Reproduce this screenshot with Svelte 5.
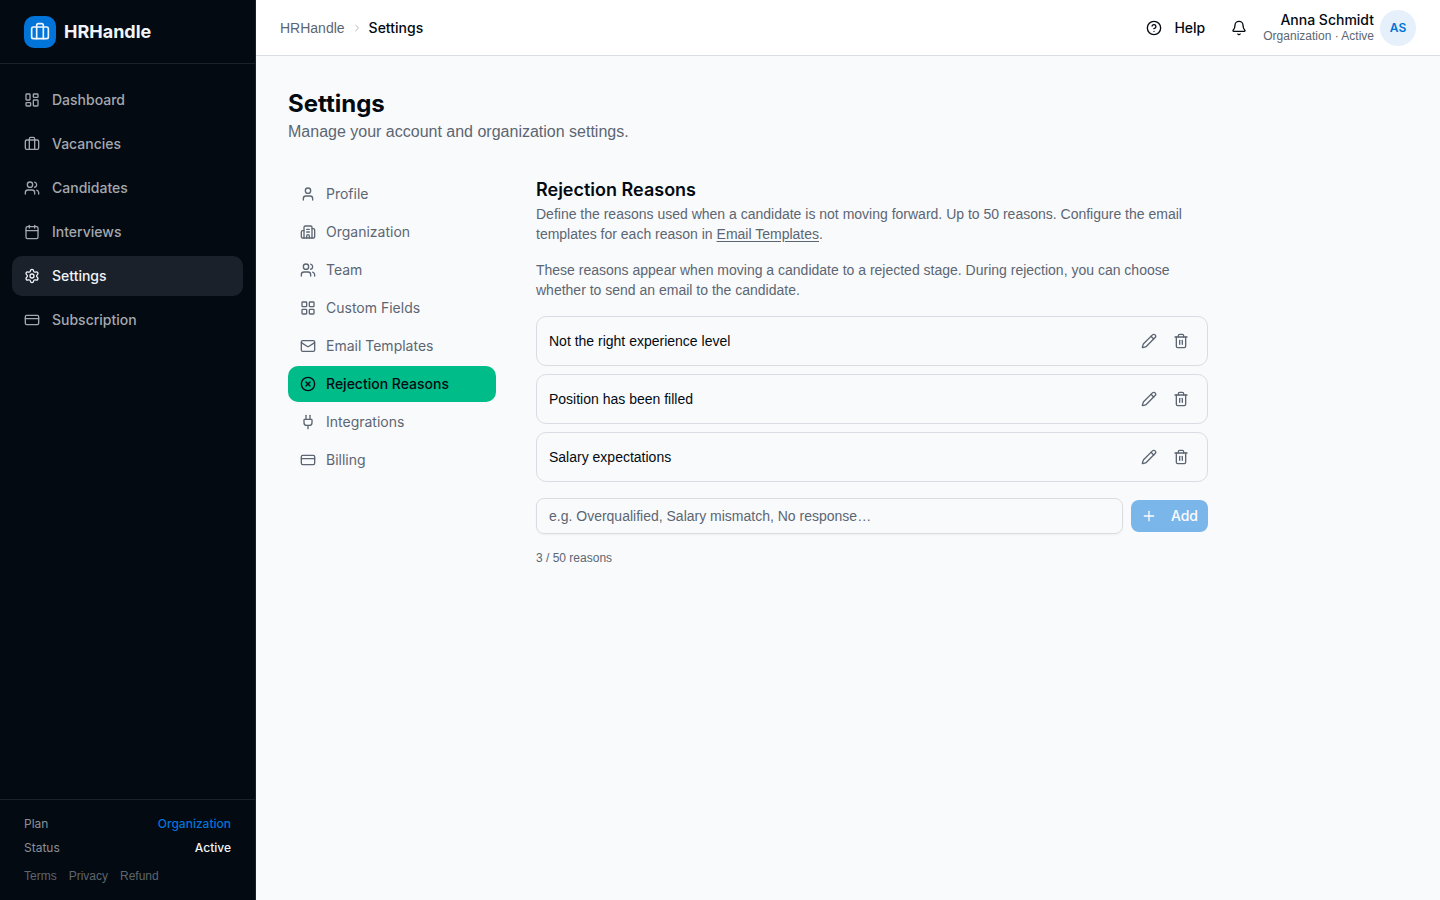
<script lang="ts">
  type Item = { label: string; icon: string; active?: boolean };

  const icons: Record<string, string[]> = {
    dashboard: [
      "M4 3h4a1 1 0 0 1 1 1v7a1 1 0 0 1-1 1H4a1 1 0 0 1-1-1V4a1 1 0 0 1 1-1z",
      "M15 3h5a1 1 0 0 1 1 1v3a1 1 0 0 1-1 1h-5a1 1 0 0 1-1-1V4a1 1 0 0 1 1-1z",
      "M15 12h5a1 1 0 0 1 1 1v7a1 1 0 0 1-1 1h-5a1 1 0 0 1-1-1v-7a1 1 0 0 1 1-1z",
      "M4 16h5a1 1 0 0 1 1 1v3a1 1 0 0 1-1 1H4a1 1 0 0 1-1-1v-3a1 1 0 0 1 1-1z",
    ],
    briefcase: [
      "M16 20V4a2 2 0 0 0-2-2h-4a2 2 0 0 0-2 2v16",
      "M4 6h16a2 2 0 0 1 2 2v10a2 2 0 0 1-2 2H4a2 2 0 0 1-2-2V8a2 2 0 0 1 2-2z",
    ],
    users: [
      "M16 21v-2a4 4 0 0 0-4-4H6a4 4 0 0 0-4 4v2",
      "M16 3.128a4 4 0 0 1 0 7.744",
      "M22 21v-2a4 4 0 0 0-3-3.87",
      "M5 7a4 4 0 1 0 8 0a4 4 0 1 0-8 0",
    ],
    calendar: [
      "M8 2v4",
      "M16 2v4",
      "M5 4h14a2 2 0 0 1 2 2v14a2 2 0 0 1-2 2H5a2 2 0 0 1-2-2V6a2 2 0 0 1 2-2z",
      "M3 10h18",
    ],
    settings: [
      "M9.671 4.136a2.34 2.34 0 0 1 4.659 0 2.34 2.34 0 0 0 3.319 1.915 2.34 2.34 0 0 1 2.33 4.033 2.34 2.34 0 0 0 0 3.831 2.34 2.34 0 0 1-2.33 4.033 2.34 2.34 0 0 0-3.319 1.915 2.34 2.34 0 0 1-4.659 0 2.34 2.34 0 0 0-3.32-1.915 2.34 2.34 0 0 1-2.33-4.033 2.34 2.34 0 0 0 0-3.831A2.34 2.34 0 0 1 6.35 6.051a2.34 2.34 0 0 0 3.319-1.915",
      "M9 12a3 3 0 1 0 6 0a3 3 0 1 0-6 0",
    ],
    card: [
      "M4 5h16a2 2 0 0 1 2 2v10a2 2 0 0 1-2 2H4a2 2 0 0 1-2-2V7a2 2 0 0 1 2-2z",
      "M2 10h20",
    ],
    user: [
      "M19 21v-2a4 4 0 0 0-4-4H9a4 4 0 0 0-4 4v2",
      "M8 7a4 4 0 1 0 8 0a4 4 0 1 0-8 0",
    ],
    building: [
      "M10 12h4",
      "M10 8h4",
      "M14 21v-3a2 2 0 0 0-4 0v3",
      "M6 10H4a2 2 0 0 0-2 2v7a2 2 0 0 0 2 2h16a2 2 0 0 0 2-2V9a2 2 0 0 0-2-2h-2",
      "M6 21V5a2 2 0 0 1 2-2h8a2 2 0 0 1 2 2v16",
    ],
    grid: [
      "M4 3h5a1 1 0 0 1 1 1v5a1 1 0 0 1-1 1H4a1 1 0 0 1-1-1V4a1 1 0 0 1 1-1z",
      "M15 3h5a1 1 0 0 1 1 1v5a1 1 0 0 1-1 1h-5a1 1 0 0 1-1-1V4a1 1 0 0 1 1-1z",
      "M15 14h5a1 1 0 0 1 1 1v5a1 1 0 0 1-1 1h-5a1 1 0 0 1-1-1v-5a1 1 0 0 1 1-1z",
      "M4 14h5a1 1 0 0 1 1 1v5a1 1 0 0 1-1 1H4a1 1 0 0 1-1-1v-5a1 1 0 0 1 1-1z",
    ],
    mail: [
      "m22 7-8.991 5.727a2 2 0 0 1-2.009 0L2 7",
      "M4 4h16a2 2 0 0 1 2 2v12a2 2 0 0 1-2 2H4a2 2 0 0 1-2-2V6a2 2 0 0 1 2-2z",
    ],
    reject: ["M2 12a10 10 0 1 0 20 0a10 10 0 1 0-20 0", "m15 9-6 6", "m9 9 6 6"],
    plug: [
      "M12 22v-5",
      "M15 8V2",
      "M17 8a1 1 0 0 1 1 1v4a4 4 0 0 1-4 4h-4a4 4 0 0 1-4-4V9a1 1 0 0 1 1-1z",
      "M9 8V2",
    ],
    help: [
      "M2 12a10 10 0 1 0 20 0a10 10 0 1 0-20 0",
      "M9.09 9a3 3 0 0 1 5.83 1c0 2-3 3-3 3",
      "M12 17h.01",
    ],
    bell: [
      "M10.268 21a2 2 0 0 0 3.464 0",
      "M3.262 15.326A1 1 0 0 0 4 17h16a1 1 0 0 0 .74-1.673C19.41 13.956 18 12.499 18 8A6 6 0 0 0 6 8c0 4.499-1.411 5.956-2.738 7.326",
    ],
    chevron: ["m9 18 6-6-6-6"],
    pencil: [
      "M21.174 6.812a1 1 0 0 0-3.986-3.987L3.842 16.174a2 2 0 0 0-.5.83l-1.321 4.352a.5.5 0 0 0 .623.622l4.353-1.32a2 2 0 0 0 .83-.497z",
      "m15 5 4 4",
    ],
    trash: [
      "M10 11v6",
      "M14 11v6",
      "M19 6v14a2 2 0 0 1-2 2H7a2 2 0 0 1-2-2V6",
      "M3 6h18",
      "M8 6V4a2 2 0 0 1 2-2h4a2 2 0 0 1 2 2v2",
    ],
    plus: ["M5 12h14", "M12 5v14"],
  };

  const mainNav: Item[] = [
    { label: "Dashboard", icon: "dashboard" },
    { label: "Vacancies", icon: "briefcase" },
    { label: "Candidates", icon: "users" },
    { label: "Interviews", icon: "calendar" },
    { label: "Settings", icon: "settings", active: true },
    { label: "Subscription", icon: "card" },
  ];

  const settingsNav: Item[] = [
    { label: "Profile", icon: "user" },
    { label: "Organization", icon: "building" },
    { label: "Team", icon: "users" },
    { label: "Custom Fields", icon: "grid" },
    { label: "Email Templates", icon: "mail" },
    { label: "Rejection Reasons", icon: "reject", active: true },
    { label: "Integrations", icon: "plug" },
    { label: "Billing", icon: "card" },
  ];

  const limit = 50;
  let reasons = $state([
    "Not the right experience level",
    "Position has been filled",
    "Salary expectations",
  ]);
  let draft = $state("");

  function add(e: SubmitEvent) {
    e.preventDefault();
    const text = draft.trim();
    if (!text || reasons.length >= limit) return;
    reasons.push(text);
    draft = "";
  }

  function edit(i: number) {
    const text = prompt("Edit reason", reasons[i])?.trim();
    if (text) reasons[i] = text;
  }
</script>

{#snippet icon(name: string, size = 16)}
  <svg
    width={size}
    height={size}
    viewBox="0 0 24 24"
    fill="none"
    stroke="currentColor"
    stroke-width="2"
    stroke-linecap="round"
    stroke-linejoin="round"
    aria-hidden="true"
  >
    {#each icons[name] as d}
      <path {d} />
    {/each}
  </svg>
{/snippet}

<div class="shell">
  <aside class="sidebar">
    <a class="brand" href="#home">
      <span class="logo">{@render icon("briefcase", 20)}</span>
      HRHandle
    </a>

    <nav class="main-nav" aria-label="Main">
      {#each mainNav as item}
        <a href="#{item.icon}" class:active={item.active} aria-current={item.active ? "page" : undefined}>
          {@render icon(item.icon)}
          {item.label}
        </a>
      {/each}
    </nav>

    <div class="account">
      <div class="line"><span>Plan</span><span class="plan">Organization</span></div>
      <div class="line"><span>Status</span><span class="status">Active</span></div>
      <div class="legal">
        <a href="#terms">Terms</a>
        <a href="#privacy">Privacy</a>
        <a href="#refund">Refund</a>
      </div>
    </div>
  </aside>

  <div class="page">
    <header class="topbar">
      <nav class="crumbs" aria-label="Breadcrumb">
        <a href="#home">HRHandle</a>
        <span class="sep">{@render icon("chevron", 12)}</span>
        <span class="current">Settings</span>
      </nav>
      <div class="actions">
        <button class="help">{@render icon("help")}Help</button>
        <button class="bell" aria-label="Notifications">{@render icon("bell")}</button>
        <button class="profile">
          <span class="who">
            <span class="name">Anna Schmidt</span>
            <span class="role">Organization · Active</span>
          </span>
          <span class="avatar">AS</span>
        </button>
      </div>
    </header>

    <main>
      <h1>Settings</h1>
      <p class="lead">Manage your account and organization settings.</p>

      <div class="columns">
        <nav class="sub-nav" aria-label="Settings">
          {#each settingsNav as item}
            <a href="#{item.icon}" class:active={item.active} aria-current={item.active ? "page" : undefined}>
              {@render icon(item.icon)}
              {item.label}
            </a>
          {/each}
        </nav>

        <section>
          <div>
            <h2>Rejection Reasons</h2>
            <p>
              Define the reasons used when a candidate is not moving forward. Up to 50 reasons. Configure the email
              templates for each reason in <a href="#mail">Email Templates</a>.
            </p>
          </div>
          <p>
            These reasons appear when moving a candidate to a rejected stage. During rejection, you can choose
            whether to send an email to the candidate.
          </p>

          <ul>
            {#each reasons as reason, i}
              <li>
                <span>{reason}</span>
                <button aria-label="Edit {reason}" onclick={() => edit(i)}>{@render icon("pencil")}</button>
                <button aria-label="Delete {reason}" onclick={() => reasons.splice(i, 1)}>{@render icon("trash")}</button>
              </li>
            {/each}
          </ul>

          <form onsubmit={add}>
            <input
              type="text"
              bind:value={draft}
              placeholder="e.g. Overqualified, Salary mismatch, No response…"
              aria-label="New rejection reason"
            />
            <button disabled={!draft.trim()}>{@render icon("plus")}Add</button>
          </form>

          <p class="count">{reasons.length} / {limit} reasons</p>
        </section>
      </div>
    </main>
  </div>
</div>

<style>
  :global(body) {
    margin: 0;
  }

  .shell {
    --ink: #030a12;
    --muted: #5c6672;
    --line: #d9dde3;
    --blue: #0074d9;
    --text: "Liberation Sans", Arial, sans-serif;
    display: flex;
    min-height: 100vh;
    background: #f9fafc;
    color: var(--ink);
    font-family: Inter, "Liberation Sans", sans-serif;
    font-size: 14px;
    line-height: 20px;
  }

  .shell * {
    box-sizing: border-box;
  }

  a {
    color: inherit;
    text-decoration: none;
  }

  button {
    padding: 0;
    border: none;
    background: none;
    color: inherit;
    font: inherit;
    cursor: pointer;
  }

  h1,
  h2,
  p,
  ul {
    margin: 0;
    padding: 0;
  }

  svg {
    display: block;
    flex: none;
  }

  .sidebar {
    position: sticky;
    top: 0;
    display: flex;
    flex-direction: column;
    flex: none;
    width: 256px;
    height: 100vh;
    border-right: 1px solid #1a212a;
    background: #030a12;
    color: #a4a8ae;
  }

  .brand {
    display: flex;
    align-items: center;
    gap: 8px;
    height: 64px;
    padding: 0 24px;
    border-bottom: 1px solid #1a212a;
    color: #f1f4f8;
    font-size: 18px;
    font-weight: 700;
  }

  .logo {
    display: grid;
    place-items: center;
    width: 32px;
    height: 32px;
    border-radius: 10px;
    background: var(--blue);
  }

  .main-nav {
    display: flex;
    flex: 1;
    flex-direction: column;
    gap: 4px;
    padding: 16px 12px;
    font-weight: 500;
  }

  .main-nav a {
    display: flex;
    align-items: center;
    gap: 12px;
    height: 40px;
    padding: 0 12px;
    border-radius: 10px;
  }

  .main-nav .active {
    background: #1a212a;
    color: #f1f4f8;
  }

  .account {
    display: flex;
    flex-direction: column;
    gap: 8px;
    padding: 16px 24px;
    border-top: 1px solid #1a212a;
    color: #8b9097;
    font-size: 12px;
    line-height: 16px;
  }

  .line {
    display: flex;
    justify-content: space-between;
  }

  .plan,
  .status {
    font-weight: 500;
  }

  .plan {
    color: var(--blue);
  }

  .status {
    color: #f1f4f8;
  }

  .legal {
    display: flex;
    gap: 12px;
    padding-top: 4px;
    color: #5f656c;
    font-family: var(--text);
  }

  .page {
    flex: 1;
    min-width: 0;
  }

  .topbar {
    display: flex;
    align-items: center;
    justify-content: space-between;
    height: 56px;
    padding: 0 24px;
    border-bottom: 1px solid var(--line);
    background: #fff;
  }

  .crumbs,
  .actions {
    display: flex;
    align-items: center;
  }

  .crumbs {
    gap: 6px;
    color: var(--muted);
  }

  .crumbs a {
    font-family: var(--text);
  }

  .sep {
    color: #b6bcc4;
  }

  .current {
    color: var(--ink);
    font-weight: 500;
  }

  .actions {
    gap: 8px;
  }

  .help {
    display: flex;
    align-items: center;
    gap: 12px;
    height: 32px;
    padding: 0 10px;
    font-weight: 500;
  }

  .bell {
    display: grid;
    place-items: center;
    width: 32px;
    height: 32px;
  }

  .profile {
    display: flex;
    align-items: center;
    gap: 6px;
  }

  .who {
    display: flex;
    flex-direction: column;
    text-align: right;
  }

  .name {
    line-height: 16px;
    font-weight: 500;
  }

  .role {
    color: var(--muted);
    font-family: var(--text);
    font-size: 12px;
    line-height: 16px;
  }

  .avatar {
    display: grid;
    place-items: center;
    width: 36px;
    height: 36px;
    border-radius: 50%;
    background: #e5f0fb;
    color: var(--blue);
    font-size: 12px;
    font-weight: 600;
  }

  main {
    padding: 32px;
  }

  h1 {
    font-size: 24px;
    line-height: 32px;
    font-weight: 700;
  }

  .lead {
    color: var(--muted);
    font-family: var(--text);
    font-size: 16px;
    line-height: 24px;
  }

  .columns {
    display: flex;
    gap: 40px;
    margin-top: 32px;
  }

  .sub-nav {
    display: flex;
    flex: none;
    flex-direction: column;
    gap: 2px;
    width: 208px;
    color: var(--muted);
  }

  .sub-nav a {
    display: flex;
    align-items: center;
    gap: 10px;
    height: 36px;
    padding: 0 12px;
    border-radius: 10px;
  }

  .sub-nav .active {
    background: #00bc89;
    color: var(--ink);
    font-weight: 500;
  }

  section {
    display: flex;
    flex: 1;
    flex-direction: column;
    gap: 16px;
    min-width: 0;
    max-width: 672px;
  }

  h2 {
    font-size: 18px;
    line-height: 28px;
    font-weight: 600;
  }

  section p {
    color: var(--muted);
    font-family: var(--text);
  }

  section p a {
    text-decoration: underline;
    text-underline-offset: 2px;
  }

  ul {
    display: flex;
    flex-direction: column;
    gap: 8px;
    list-style: none;
  }

  li {
    display: flex;
    align-items: center;
    height: 50px;
    padding: 0 10px 0 12px;
    border: 1px solid var(--line);
    border-radius: 10px;
    font-family: var(--text);
  }

  li span {
    flex: 1;
  }

  li button {
    display: grid;
    place-items: center;
    width: 32px;
    height: 32px;
    color: var(--muted);
  }

  form {
    display: flex;
    align-items: center;
    gap: 8px;
  }

  input {
    flex: 1;
    min-width: 0;
    height: 36px;
    padding: 0 12px;
    border: 1px solid var(--line);
    border-radius: 8px;
    background: transparent;
    box-shadow: 0 1px 2px rgba(0, 0, 0, 0.05);
    color: inherit;
    font: inherit;
    font-family: var(--text);
  }

  input::placeholder {
    color: var(--muted);
    opacity: 1;
  }

  form button {
    display: flex;
    align-items: center;
    gap: 14px;
    height: 32px;
    padding: 0 10px;
    border-radius: 8px;
    background: var(--blue);
    color: #fff;
    font-weight: 500;
  }

  form button:disabled {
    opacity: 0.5;
    cursor: default;
  }

  section .count {
    font-size: 12px;
    line-height: 16px;
  }
</style>
